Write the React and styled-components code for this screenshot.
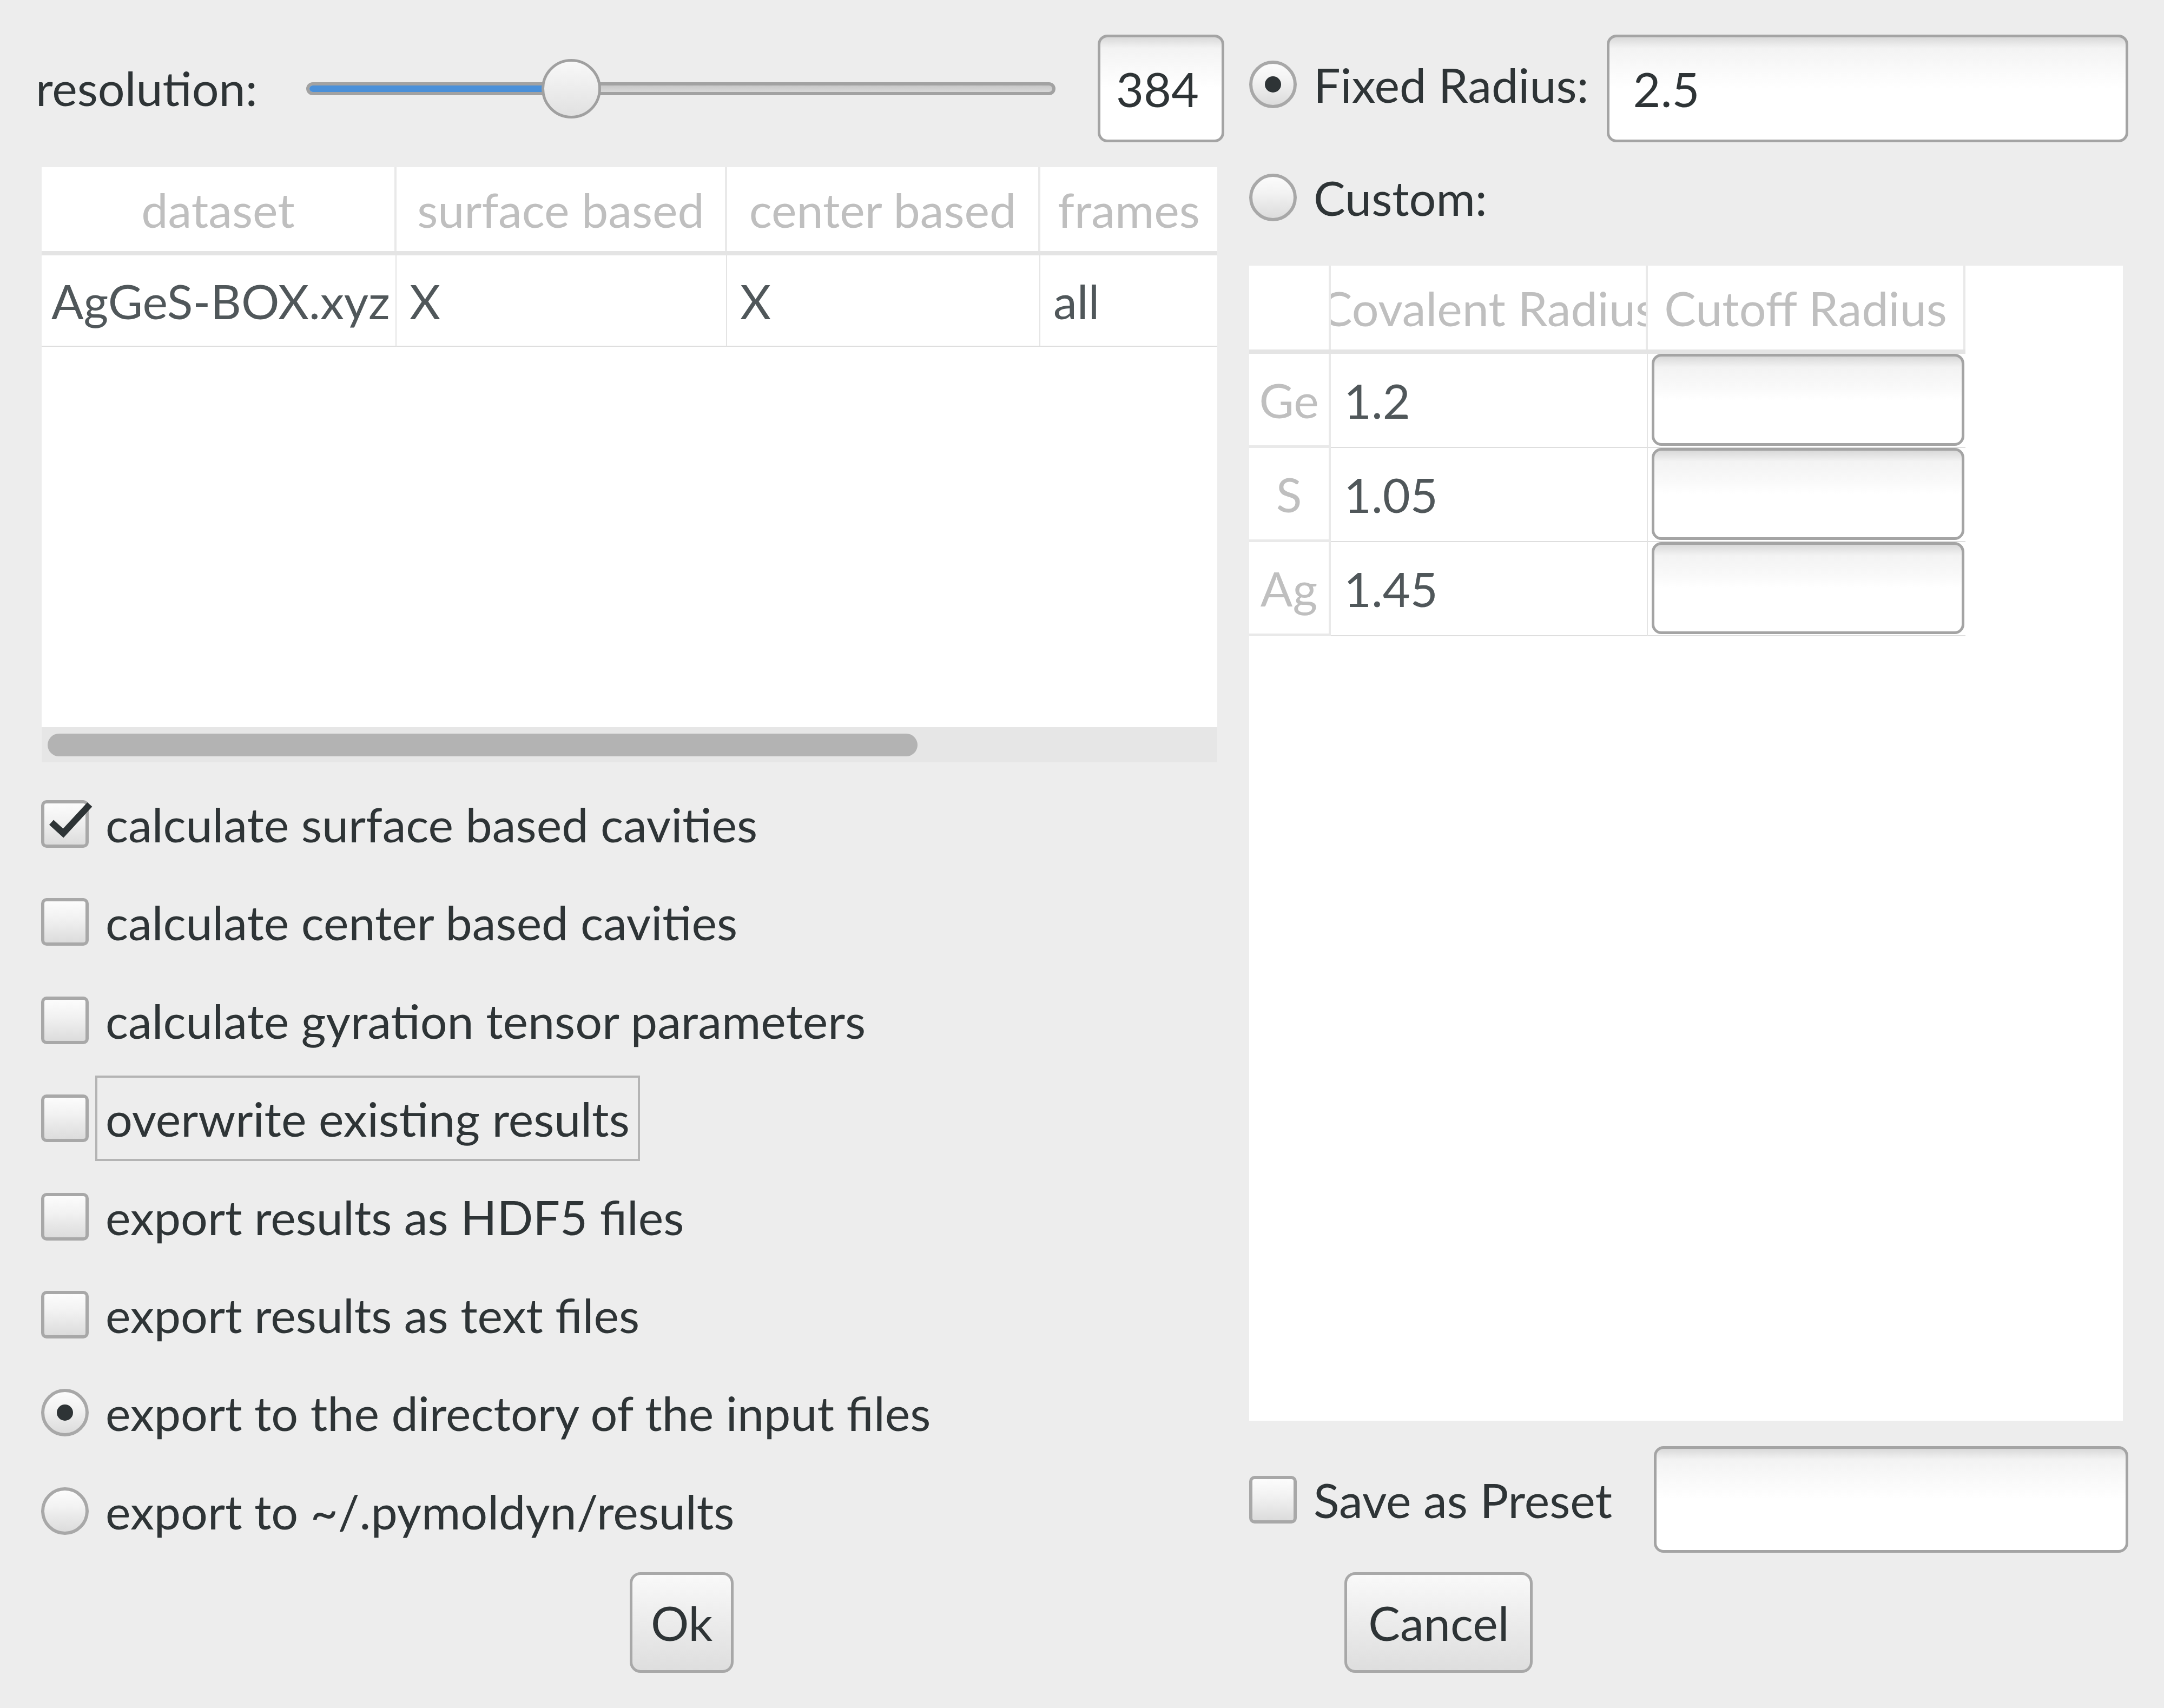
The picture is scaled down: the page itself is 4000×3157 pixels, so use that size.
import styled, { createGlobalStyle } from "styled-components";

const GlobalStyle = createGlobalStyle`
  html, body {
    margin: 0;
    padding: 0;
    background: #ededed;
  }
  body {
    font-family: Lato, "Open Sans", sans-serif;
    color: #2e3436;
  }
`;

const Window = styled.div`
  width: 4000px;
  height: 3157px;
  box-sizing: border-box;
  padding: 64px 0 0 66px;
  display: grid;
  grid-template-columns: 2197px 1625px;
  grid-template-rows: auto 1fr;
  column-gap: 46px;
  font-size: 88px;
  background: #ededed;
`;

const Column = styled.div`
  display: flex;
  flex-direction: column;
`;

/* ---------- shared widgets ---------- */

const fieldBg = `linear-gradient(to bottom, #d9d9d9 0px, #f3f3f3 20px, #f9f9f9 55px, #ffffff 50%)`;

const TextField = styled.div`
  box-sizing: border-box;
  height: ${(p) => p.$h || 199}px;
  border: 5px solid #a4a4a4;
  border-radius: 18px;
  background: ${fieldBg};
  display: flex;
  align-items: center;
  padding-left: ${(p) => p.$pad || 40}px;
  flex: ${(p) => (p.$grow ? 1 : "none")};
  margin-left: ${(p) => p.$ml || 0}px;
  width: ${(p) => (p.$w ? `${p.$w}px` : "auto")};
  white-space: nowrap;
`;

const Indicator = styled.span`
  flex: none;
  position: relative;
  box-sizing: border-box;
  width: 88px;
  height: 88px;
  border: 6px solid #a8a8a8;
  border-radius: ${(p) => (p.$round ? "50%" : "10px")};
  background: linear-gradient(to bottom, #fcfcfc, #f2f2f2 40%, #dcdcdc);
  display: flex;
  align-items: center;
  justify-content: center;
`;

const Dot = styled.span`
  width: 30px;
  height: 30px;
  border-radius: 50%;
  background: #2e3436;
`;

const CheckMark = styled.svg`
  position: absolute;
  left: -6px;
  top: -6px;
  overflow: visible;
`;

const OptionRow = styled.div`
  display: flex;
  align-items: center;
  height: ${(p) => p.$h || 158}px;
  flex: none;
  margin-top: ${(p) => p.$mt || 0}px;
  & > span {
    margin-bottom: ${(p) => p.$lift || 0}px;
  }
`;

const OptionLabel = styled.span`
  margin-left: 12px;
  padding: 0 15px;
  line-height: 150px;
  border: 4px solid ${(p) => (p.$focus ? "#b4b4b4" : "transparent")};
  white-space: nowrap;
`;

const Option = ({ kind = "check", checked, focus, children }) => (
  <OptionRow>
    <Indicator $round={kind === "radio"}>
      {kind === "radio" && checked && <Dot />}
      {kind === "check" && checked && (
        <CheckMark width="88" height="88" viewBox="0 0 88 88">
          <polyline
            points="19,41 41,61 90,8"
            fill="none"
            stroke="#2e3436"
            strokeWidth="12"
          />
        </CheckMark>
      )}
    </Indicator>
    <OptionLabel $focus={focus}>{children}</OptionLabel>
  </OptionRow>
);

/* ---------- slider row ---------- */

const SliderRow = styled.div`
  display: flex;
  align-items: center;
  height: 199px;
`;

const SliderLabel = styled.span`
  margin-bottom: 4px;
`;

const SliderBox = styled.div`
  position: relative;
  flex: 1;
  height: 110px;
  margin: 0 78px 0 90px;
  display: flex;
  align-items: center;
`;

const Groove = styled.div`
  position: relative;
  width: 100%;
  height: 24px;
  box-sizing: border-box;
  border: 6px solid #a2a2a2;
  border-radius: 12px;
  background: linear-gradient(to bottom, #c8c8c8, #d8d8d8);
  overflow: hidden;
`;

const GrooveFill = styled.div`
  height: 100%;
  background: #4a90d9;
`;

const Handle = styled.div`
  position: absolute;
  top: 0;
  width: 110px;
  height: 110px;
  box-sizing: border-box;
  border-radius: 50%;
  border: 5px solid #a0a0a0;
  background: linear-gradient(to bottom, #f8f8f8, #e1e1e1);
`;

/* ---------- tables ---------- */

const DataTable = styled.div`
  margin: 46px 0 0 11px;
  width: 2173px;
  height: 1100px;
  background: #ffffff;
  display: flex;
  flex-direction: column;
`;

const dataCols = "656px 611px 579px 1fr";

const HeadRow = styled.div`
  display: grid;
  grid-template-columns: ${(p) => p.$cols};
  width: ${(p) => p.$w || "100%"};
  height: 155px;
  border-bottom: 8px solid #e4e4e4;
  flex: none;
`;

const HeadCell = styled.div`
  display: flex;
  align-items: center;
  justify-content: center;
  overflow: hidden;
  white-space: nowrap;
  color: #bfbfbf;
  border-right: 4px solid #e9e9e9;
  &:last-child {
    border-right: ${(p) => (p.$lastBorder ? "4px solid #e9e9e9" : "none")};
  }
`;

const BodyRow = styled.div`
  display: grid;
  grid-template-columns: ${(p) => p.$cols};
  width: ${(p) => p.$w || "100%"};
  height: ${(p) => p.$h}px;
  flex: none;
`;

const BodyCell = styled.div`
  display: flex;
  align-items: center;
  padding-left: ${(p) => (p.$pad === undefined ? 24 : p.$pad)}px;
  overflow: hidden;
  white-space: nowrap;
  color: #50575a;
  border-bottom: 2px solid #dedede;
  border-right: 2px solid #e4e4e4;
  &:last-child {
    border-right: none;
  }
`;

const RowHead = styled.div`
  display: flex;
  align-items: center;
  justify-content: center;
  color: #bfbfbf;
  border-right: 4px solid #e9e9e9;
  border-bottom: 5px solid #e9e9e9;
`;

const Filler = styled.div`
  flex: 1;
`;

const ScrollTrack = styled.div`
  flex: none;
  height: 65px;
  background: #e6e6e6;
  padding: 12px 0 0 11px;
  box-sizing: border-box;
`;

const ScrollThumb = styled.div`
  width: 1608px;
  height: 42px;
  border-radius: 21px;
  background: #b3b3b3;
`;

const OptionList = styled.div`
  margin: 35px 0 0 10px;
  display: flex;
  flex-direction: column;
  gap: 23.4px;
`;

const RadiusTable = styled.div`
  margin-top: 47px;
  width: 1615px;
  height: 2135px;
  background: #ffffff;
  display: flex;
  flex-direction: column;
`;

const radiusCols = "151px 586px 587px";

const FieldCell = styled.div`
  padding: 0 2px 2px 7px;
  border-bottom: 2px solid #dedede;
  display: flex;
`;

/* ---------- buttons ---------- */

const ButtonBar = styled.div`
  grid-column: 1 / -1;
  display: flex;
  align-items: flex-start;
  margin-top: 34px;
  padding-left: 1098px;
  gap: 1129px;
`;

const Button = styled.div`
  box-sizing: border-box;
  height: 186px;
  padding: 0 ${(p) => p.$pad || 39}px;
  border: 5px solid #a8a8a8;
  border-radius: 20px;
  background: linear-gradient(to bottom, #f9f9f9, #dedede);
  display: flex;
  align-items: center;
`;

const elements = [
  { el: "Ge", cov: "1.2" },
  { el: "S", cov: "1.05" },
  { el: "Ag", cov: "1.45" },
];

export default function App() {
  const sliderPos = 35.4;
  return (
    <>
      <GlobalStyle />
      <Window>
        <Column>
          <SliderRow>
            <SliderLabel>resolution:</SliderLabel>
            <SliderBox>
              <Groove>
                <GrooveFill style={{ width: `${sliderPos}%` }} />
              </Groove>
              <Handle style={{ left: `calc(${sliderPos}% - 55px)` }} />
            </SliderBox>
            <TextField $w={234} $pad={29}>
              384
            </TextField>
          </SliderRow>

          <DataTable>
            <HeadRow $cols={dataCols}>
              <HeadCell>dataset</HeadCell>
              <HeadCell>surface based</HeadCell>
              <HeadCell>center based</HeadCell>
              <HeadCell>frames</HeadCell>
            </HeadRow>
            <BodyRow $cols={dataCols} $h={169}>
              <BodyCell $pad={18}>AgGeS-BOX.xyz</BodyCell>
              <BodyCell>X</BodyCell>
              <BodyCell>X</BodyCell>
              <BodyCell>all</BodyCell>
            </BodyRow>
            <Filler />
            <ScrollTrack>
              <ScrollThumb />
            </ScrollTrack>
          </DataTable>

          <OptionList>
            <Option checked>calculate surface based cavities</Option>
            <Option>calculate center based cavities</Option>
            <Option>calculate gyration tensor parameters</Option>
            <Option focus>overwrite existing results</Option>
            <Option>export results as HDF5 files</Option>
            <Option>export results as text files</Option>
            <Option kind="radio" checked>
              export to the directory of the input files
            </Option>
            <Option kind="radio">export to ~/.pymoldyn/results</Option>
          </OptionList>
        </Column>

        <Column>
          <OptionRow $h={199}>
            <Indicator $round style={{ marginBottom: 16 }}>
              <Dot />
            </Indicator>
            <OptionLabel style={{ marginBottom: 16 }}>Fixed Radius:</OptionLabel>
            <TextField $grow $ml={14} $pad={44}>
              2.5
            </TextField>
          </OptionRow>
          <OptionRow $mt={23}>
            <Indicator $round />
            <OptionLabel>Custom:</OptionLabel>
          </OptionRow>

          <RadiusTable>
            <HeadRow $cols={radiusCols} $w="1324px">
              <HeadCell />
              <HeadCell>Covalent Radius</HeadCell>
              <HeadCell $lastBorder>Cutoff Radius</HeadCell>
            </HeadRow>
            {elements.map((r) => (
              <BodyRow key={r.el} $cols={radiusCols} $w="1324px" $h={174}>
                <RowHead>{r.el}</RowHead>
                <BodyCell>{r.cov}</BodyCell>
                <FieldCell>
                  <TextField $grow $h={170} />
                </FieldCell>
              </BodyRow>
            ))}
          </RadiusTable>

          <OptionRow $h={197} $mt={47}>
            <Indicator />
            <OptionLabel>Save as Preset</OptionLabel>
            <TextField $grow $ml={58} $h={197} />
          </OptionRow>
        </Column>

        <ButtonBar>
          <Button $pad={34}>Ok</Button>
          <Button>Cancel</Button>
        </ButtonBar>
      </Window>
    </>
  );
}
